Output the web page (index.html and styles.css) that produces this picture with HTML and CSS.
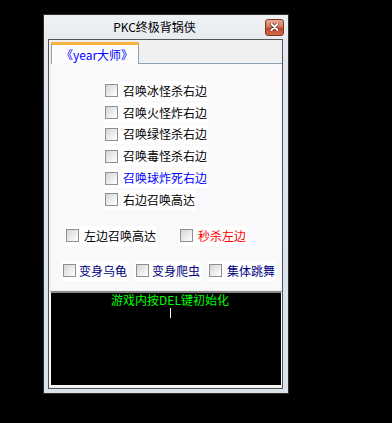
FILE: index.html
```html
<!DOCTYPE html>
<html lang="zh-CN">
<head>
  <meta charset="UTF-8">
  <meta name="viewport" content="width=device-width, initial-scale=1.0">
  <title>PKC终极背锅侠</title>
  <link rel="stylesheet" href="styles.css">
</head>
<body>
  <div class="window">
    <div class="titlebar">
      <span class="title">PKC终极背锅侠</span>
      <span class="close">
        <svg width="9" height="8" viewBox="0 0 9 8">
          <path d="M1.5 1 L7.5 7 M7.5 1 L1.5 7" stroke="#5a1e10" stroke-width="3.2" stroke-linecap="round"/>
          <path d="M1.5 1 L7.5 7 M7.5 1 L1.5 7" stroke="#fff" stroke-width="2" stroke-linecap="round"/>
        </svg>
      </span>
    </div>

    <div class="client">
      <div class="tabs">
        <div class="tab">《year大师》</div>
        <div class="tab-fill"></div>
      </div>

      <div class="panel">
        <div class="list">
          <label class="check"><span class="box"></span>召唤冰怪杀右边</label>
          <label class="check"><span class="box"></span>召唤火怪炸右边</label>
          <label class="check"><span class="box"></span>召唤绿怪杀右边</label>
          <label class="check"><span class="box"></span>召唤毒怪杀右边</label>
          <label class="check blue"><span class="box"></span>召唤球炸死右边</label>
          <label class="check"><span class="box"></span>右边召唤高达</label>
        </div>

        <div class="row row-mid">
          <label class="check"><span class="box"></span>左边召唤高达</label>
          <label class="check red"><span class="box"></span>秒杀左边</label>
        </div>

        <div class="row row-bottom">
          <label class="check navy"><span class="box"></span>变身乌龟</label>
          <label class="check navy"><span class="box"></span>变身爬虫</label>
          <label class="check navy wide"><span class="box"></span>集体跳舞</label>
        </div>
      </div>

      <div class="console">
        <div class="console-text">游戏内按DEL键初始化</div>
        <div class="caret"></div>
      </div>
    </div>
  </div>
</body>
</html>
```

FILE: styles.css
```css
body {
  margin: 0;
  padding: 14px 0 0 43px;
  height: 423px;
  box-sizing: border-box;
  overflow: hidden;
  background: #000;
  font-family: "Noto Sans CJK SC", sans-serif;
  font-size: 12px;
}
.window {
  width: 246px;
  height: 380px;
  box-sizing: border-box;
  border: 1px solid #2e2e2e;
  background: linear-gradient(#eef1f4, #e2e8ee 40px, #dae2ea);
  display: flex;
  flex-direction: column;
}
.titlebar {
  height: 24px;
  display: flex;
  align-items: center;
  padding-right: 4px;
}
.title {
  flex: 1;
  text-align: center;
  color: #000;
  line-height: 14px;
}
.close {
  width: 19px;
  height: 17px;
  box-sizing: border-box;
  border: 1px solid #7c3522;
  border-radius: 3px;
  background: linear-gradient(#e9a897, #d9795f 45%, #c2452b 55%, #d4694c);
  display: flex;
  align-items: center;
  justify-content: center;
}
.client {
  flex: 1;
  margin: 0 5px 4px 4px;
  padding: 2px 0 0 2px;
  border: 1px solid #555;
  background: #f0f0f0;
  display: flex;
  flex-direction: column;
}
.tabs {
  display: flex;
  height: 22px;
}
.tab {
  width: 88px;
  box-sizing: border-box;
  border-top: 3px solid #f6b33d;
  border-left: 1px solid #8ea3b6;
  border-right: 1px solid #8ea3b6;
  background: #fcfcfc;
  color: #0000ff;
  padding-left: 9px;
  display: flex;
  align-items: center;
}
.tab-fill {
  flex: 1;
  border-bottom: 1px solid #8ea3b6;
}
.panel {
  height: 226px;
  background: #f9f9fb;
}
.list {
  display: grid;
  grid-auto-rows: 21.8px;
  align-items: center;
  justify-items: start;
  padding: 16px 0 0 53px;
}
.check {
  display: flex;
  align-items: center;
  gap: 5px;
  height: 20px;
  padding: 0 1px;
  background: #fff;
  color: #000;
  line-height: 14px;
  white-space: nowrap;
}
.box {
  width: 13px;
  height: 13px;
  box-sizing: border-box;
  border: 1px solid #8e8f8f;
  background: linear-gradient(135deg, #d4d4d4, #f4f4f4 70%, #fff);
}
.blue {
  color: #0000ff;
}
.red {
  color: #ff0000;
}
.navy {
  color: #000080;
  gap: 3px;
}
.navy.wide {
  gap: 5px;
}
.row {
  display: flex;
  align-items: center;
}
.row-mid {
  margin: 15px 0 0 14px;
  gap: 22px;
}
.row-bottom {
  margin: 15px 0 0 11px;
  gap: 7px;
}
.console {
  flex: 1;
  margin: 1px 0 2px -1px;
  padding-left: 8px;
  border-top: 2px solid #8a8a8a;
  border-left: 1px solid #fff;
  border-right: 1px solid #fff;
  border-bottom: 1px solid #fff;
  background: #000;
}
.console-text {
  color: #00ff00;
  text-align: center;
  line-height: 14px;
}
.caret {
  width: 1px;
  height: 10px;
  margin: 1px auto 0;
  background: #fff;
}
```
